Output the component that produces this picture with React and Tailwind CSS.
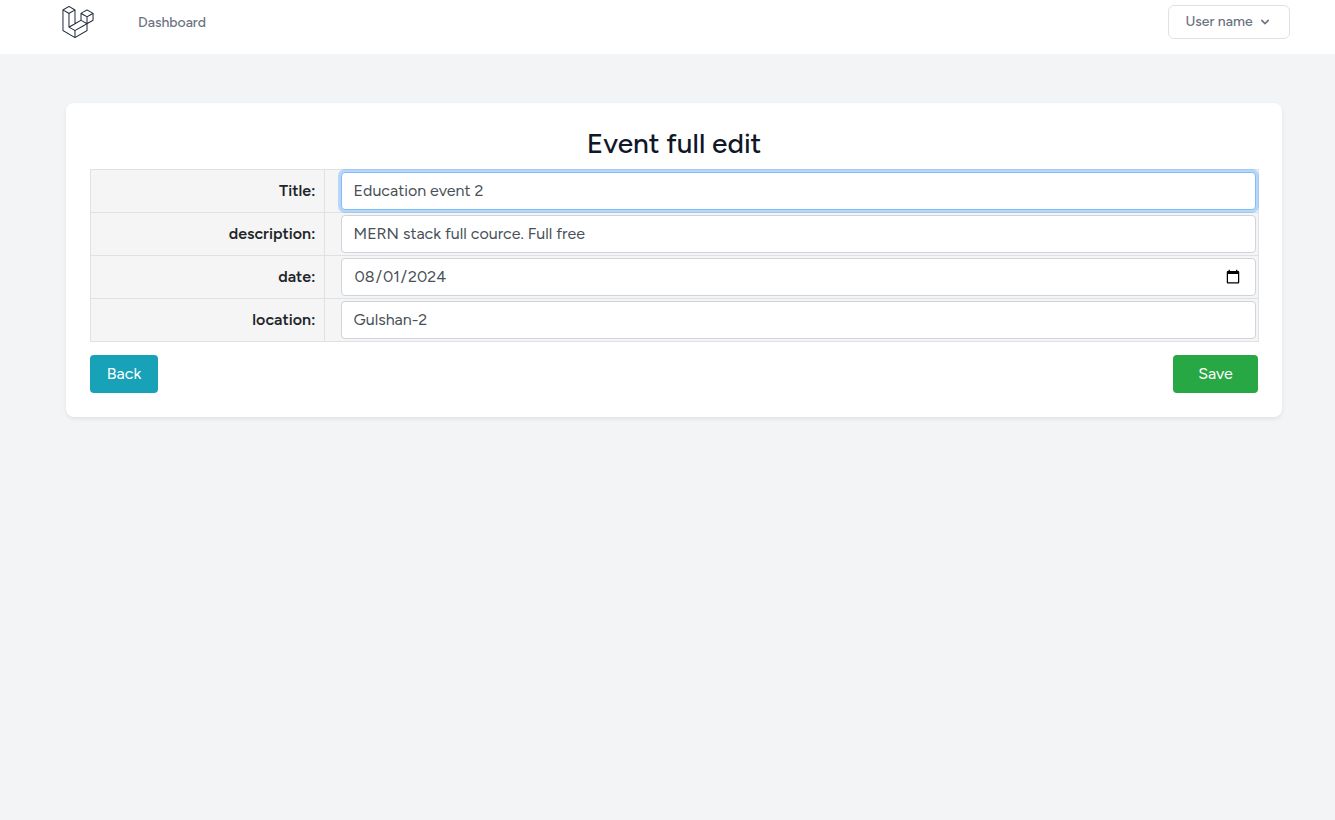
import { SiLaravel } from "react-icons/si";

const fields = [
  { id: "title", label: "Title:", type: "text", value: "Education event 2", active: true },
  { id: "description", label: "description:", type: "text", value: "MERN stack full cource. Full free" },
  { id: "date", label: "date:", type: "date", value: "2024-08-01" },
  { id: "location", label: "location:", type: "text", value: "Gulshan-2" },
];

const inputBase =
  "block w-full h-[38px] rounded border bg-white px-3 text-base text-[#495057] outline-none";
const inputKind = { text: "pb-0.5", date: "pb-0" };
const inputIdle = "border-[#ced4da]";
const inputActive = "relative border-[#80bdff] ring-3 ring-[#007bff]/25";

function NavBar() {
  return (
    <nav className="flex h-[54px] items-start justify-between bg-white pt-[5px] pr-[45px] pl-[62px]">
      <div className="flex items-center gap-11 pt-px">
        <a href="#home" aria-label="Home" className="text-gray-800">
          <SiLaravel className="size-8" />
        </a>
        <a href="#dashboard" className="pt-0.5 text-sm font-medium text-gray-500">
          Dashboard
        </a>
      </div>
      <button
        type="button"
        className="flex h-[34px] w-[122px] items-center justify-center gap-1 rounded-md border border-[#dee2e6] bg-white text-sm font-medium text-gray-500"
      >
        User name
        <svg className="size-4" viewBox="0 0 20 20" fill="currentColor" aria-hidden="true">
          <path
            fillRule="evenodd"
            clipRule="evenodd"
            d="M5.293 7.293a1 1 0 011.414 0L10 10.586l3.293-3.293a1 1 0 111.414 1.414l-4 4a1 1 0 01-1.414 0l-4-4a1 1 0 010-1.414z"
          />
        </svg>
      </button>
    </nav>
  );
}

function FieldRow({ field }) {
  return (
    <tr>
      <th scope="row" className="w-1/5 border border-[#dee2e6] p-0 pr-2 text-right font-semibold">
        <label htmlFor={field.id}>{field.label}</label>
      </th>
      <td className="border border-[#dee2e6] py-0.5 pr-0.5 pl-4">
        <input
          id={field.id}
          name={field.id}
          type={field.type}
          defaultValue={field.value}
          className={`${inputBase} ${inputKind[field.type]} ${field.active ? inputActive : inputIdle}`}
        />
      </td>
    </tr>
  );
}

export default function App() {
  return (
    <div className="min-h-screen bg-gray-100 font-['Figtree','Lato',sans-serif] text-base text-[#212529]">
      <NavBar />
      <main className="pt-[49px] pr-[53px] pl-[66px]">
        <form className="rounded-lg bg-white p-6 shadow-[0_2px_4px_rgba(0,0,0,0.075)]">
          <h1 className="mb-2.5 text-center text-[28px] leading-8 font-medium text-gray-900">
            Event full edit
          </h1>
          <table className="w-[calc(100%+1px)] border-collapse bg-[#f5f5f5]">
            <tbody>
              {fields.map((field) => (
                <FieldRow key={field.id} field={field} />
              ))}
            </tbody>
          </table>
          <div className="mt-[13px] flex justify-between">
            <button type="button" className="h-[38px] w-[68px] rounded bg-[#17a2b8] text-white">
              Back
            </button>
            <button type="submit" className="h-[38px] w-[85px] rounded bg-[#28a745] text-white">
              Save
            </button>
          </div>
        </form>
      </main>
    </div>
  );
}
